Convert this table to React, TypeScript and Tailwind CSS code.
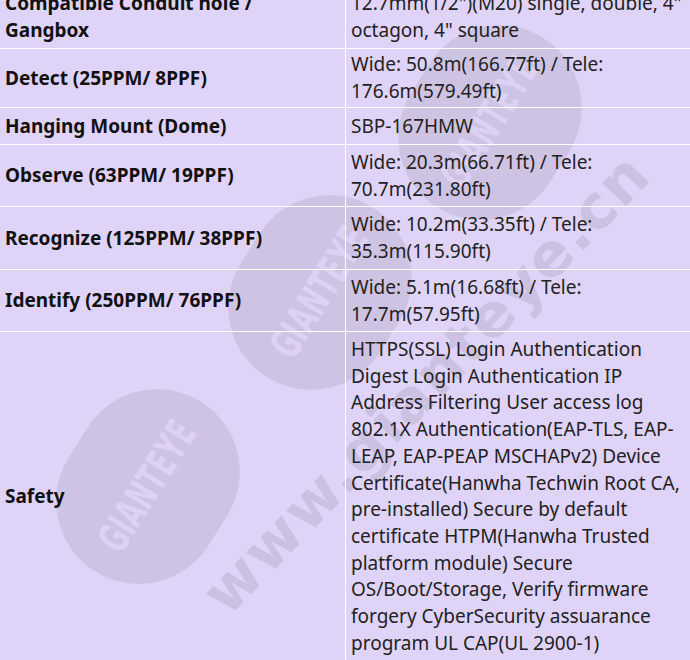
import React from "react";

type Row = { label: string; value: string; h: string };

const rows: Row[] = [
  {
    label: "Compatible Conduit hole / Gangbox",
    value: '12.7mm(1/2")(M20) single, double, 4" octagon, 4" square',
    h: "h-[63px]",
  },
  { label: "Detect (25PPM/ 8PPF)", value: "Wide: 50.8m(166.77ft) / Tele: 176.6m(579.49ft)", h: "h-[59px]" },
  { label: "Hanging Mount (Dome)", value: "SBP-167HMW", h: "h-[37px]" },
  { label: "Observe (63PPM/ 19PPF)", value: "Wide: 20.3m(66.71ft) / Tele: 70.7m(231.80ft)", h: "h-[62px]" },
  { label: "Recognize (125PPM/ 38PPF)", value: "Wide: 10.2m(33.35ft) / Tele: 35.3m(115.90ft)", h: "h-[63px]" },
  { label: "Identify (250PPM/ 76PPF)", value: "Wide: 5.1m(16.68ft) / Tele: 17.7m(57.95ft)", h: "h-[62px]" },
  {
    label: "Safety",
    value:
      "HTTPS(SSL) Login Authentication Digest Login Authentication IP Address Filtering User access log 802.1X Authentication(EAP-TLS, EAP-LEAP, EAP-PEAP MSCHAPv2) Device Certificate(Hanwha Techwin Root CA, pre-installed) Secure by default certificate HTPM(Hanwha Trusted platform module) Secure OS/Boot/Storage, Verify firmware forgery CyberSecurity assuarance program UL CAP(UL 2900-1)",
    h: "h-auto",
  },
];

const Blob: React.FC<{ className: string }> = ({ className }) => (
  <div
    className={`absolute w-[200px] h-[165px] rounded-full bg-[#cfc3e3] flex items-center justify-center ${className}`}
  >
    <span className="text-[42px] font-bold tracking-[1px] text-[#ddd1f4] scale-x-[0.6] [font-family:'DejaVu_Sans',sans-serif]">
      GIANTEYE
    </span>
  </div>
);

const App: React.FC = () => {
  return (
    <div className="relative w-[690px] h-[660px] overflow-hidden bg-[#e0d3f8] [font-family:'Noto_Sans',sans-serif] text-[19px] leading-[26.7px]">
      {/* watermark, drawn beneath the table */}
      <div className="absolute inset-0 pointer-events-none">
        <Blob className="left-[390px] top-[40px] -rotate-[58deg]" />
        <Blob className="left-[220px] top-[210px] -rotate-[58deg]" />
        <Blob className="left-[48px] top-[404px] -rotate-[58deg]" />
        <div className="absolute left-[120px] top-[370px] -rotate-[46deg] text-[60px] font-bold text-[#cdc1e2] tracking-[2px] [font-family:'DejaVu_Sans',sans-serif]">
          www.gianteye.cn
        </div>
      </div>

      <div className="relative -mt-[14px]">
        {rows.map((row) => (
          <div key={row.label} className={`flex border-b border-white ${row.h}`}>
            <div className="w-[346px] shrink-0 border-r border-white flex items-center px-[5px] font-bold text-[#111]">
              {row.label}
            </div>
            <div className="flex-1 flex items-center px-[5px] py-[4px] text-[#222]">
              {row.value}
            </div>
          </div>
        ))}
      </div>
    </div>
  );
};

export default App;
